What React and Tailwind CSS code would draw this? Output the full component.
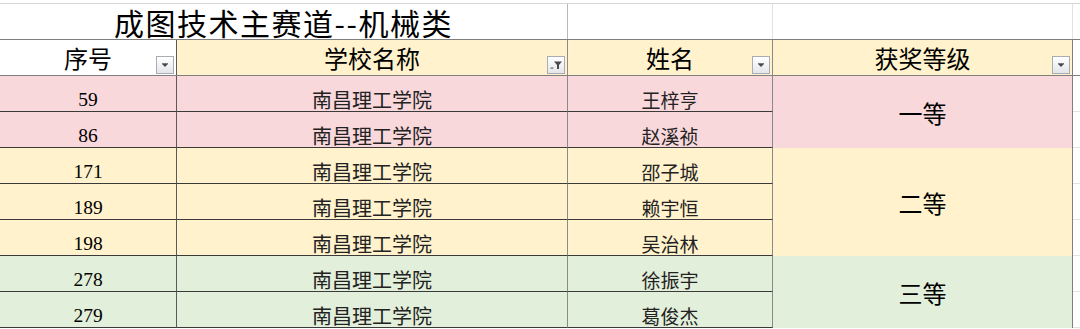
import React from "react";

const SANS = { fontFamily: '"Noto Sans CJK SC", "Noto Sans", sans-serif' };
const SERIF = { fontFamily: '"Liberation Serif", "Noto Sans CJK SC", serif' };

function DropBtn({ filter }) {
  return (
    <div className="absolute right-[2px] bottom-[1px] w-[18px] h-[18px] border border-[#a9adb3] bg-gradient-to-b from-white to-[#e3e6ea] flex items-center justify-center">
      {filter ? (
        <svg width="14" height="12" viewBox="0 0 14 12">
          <path d="M5 2.5h8l-3 3.5v4h-2v-4z" fill="#4a4a4a" />
          <rect x="1.5" y="8.5" width="3" height="1.2" fill="#6a6a6a" />
        </svg>
      ) : (
        <svg width="10" height="8" viewBox="0 0 10 8">
          <rect x="2" y="2" width="6" height="1" fill="#7a7a7a" />
          <path d="M2 3h6l-3 3z" fill="#4a4a4a" />
        </svg>
      )}
    </div>
  );
}

const rows = [
  { n: "59", name: "王梓亨", bg: "bg-[#f9d8dc]" },
  { n: "86", name: "赵溪祯", bg: "bg-[#f9d8dc]" },
  { n: "171", name: "邵子城", bg: "bg-[#fff2cc]" },
  { n: "189", name: "赖宇恒", bg: "bg-[#fff2cc]" },
  { n: "198", name: "吴治林", bg: "bg-[#fff2cc]" },
  { n: "278", name: "徐振宇", bg: "bg-[#e2efda]" },
  { n: "279", name: "葛俊杰", bg: "bg-[#e2efda]" },
];

export default function App() {
  return (
    <div className="w-[1080px] h-[329px] bg-white overflow-hidden flex flex-col text-black">
      <div className="h-[4px] border-b border-[#d6d6d6] shrink-0" />
      {/* Title row */}
      <div className="h-[35px] flex shrink-0">
        <div
          className="w-[568px] border-r border-[#b8b8b8] flex items-center justify-center pt-[1px] text-[30px] leading-[30px] tracking-[1.5px]"
          style={SANS}
        >
          成图技术主赛道--机械类
        </div>
        <div className="w-[205px] border-r border-[#e2e2e2]" />
        <div className="w-[300px] border-r border-[#e2e2e2]" />
        <div className="flex-1" />
      </div>
      {/* Header row */}
      <div className="h-[37px] flex shrink-0 border-t border-b border-[#7f7f7f] leading-[28px]" style={SANS}>
        <div className="relative w-[177px] bg-white border-r border-[#5a5a5a] flex items-center justify-center pt-[1px] text-[24px]">
          序号
          <DropBtn />
        </div>
        <div className="relative w-[391px] bg-[#fff2cc] border-r border-[#8a8a8a] flex items-center justify-center pt-[1px] text-[24px]">
          学校名称
          <DropBtn filter />
        </div>
        <div className="relative w-[205px] bg-[#fff2cc] border-r border-[#8a8a8a] flex items-center justify-center pt-[1px] text-[24px]">
          姓名
          <DropBtn />
        </div>
        <div className="relative w-[300px] bg-[#fff2cc] border-r border-[#7f7f7f] flex items-center justify-center pt-[1px] text-[24px]">
          获奖等级
          <DropBtn />
        </div>
        <div className="flex-1 bg-white" />
      </div>
      {/* Body */}
      <div className="grid grid-cols-[177px_391px_205px_300px_1fr] grid-rows-[repeat(7,36px)] shrink-0">
        {rows.map((r, i) => (
          <React.Fragment key={r.n}>
            <div
              className={`${r.bg} border-r border-b border-[#3a3a3a] border-r-[#5a5a5a] flex items-end justify-center text-[19.5px] leading-[22px]`}
              style={{ ...SERIF, gridRow: i + 1, gridColumn: 1 }}
            >
              {r.n}
            </div>
            <div
              className={`${r.bg} border-r border-b border-[#3a3a3a] border-r-[#8a8a8a] flex items-end justify-center text-[20px] leading-[23px] text-[#222]`}
              style={{ ...SANS, gridRow: i + 1, gridColumn: 2 }}
            >
              南昌理工学院
            </div>
            <div
              className={`${r.bg} border-r border-b border-[#3a3a3a] border-r-[#8a8a8a] flex items-end justify-center text-[19px] leading-[23px] text-[#222]`}
              style={{ ...SANS, gridRow: i + 1, gridColumn: 3 }}
            >
              {r.name}
            </div>
            <div
              className="border-b border-[#e4e4e4]"
              style={{ gridRow: i + 1, gridColumn: 5 }}
            />
          </React.Fragment>
        ))}
        <div
          className="bg-[#f9d8dc] border-r border-[#7f7f7f] flex items-center justify-center pt-[2px] text-[24px]"
          style={{ ...SANS, gridRow: "1 / span 2", gridColumn: 4 }}
        >
          一等
        </div>
        <div
          className="bg-[#fff2cc] border-r border-[#7f7f7f] flex items-center justify-center pt-[2px] text-[24px]"
          style={{ ...SANS, gridRow: "3 / span 3", gridColumn: 4 }}
        >
          二等
        </div>
        <div
          className="bg-[#e2efda] border-r border-[#7f7f7f] flex items-center justify-center pt-[2px] text-[24px]"
          style={{ ...SANS, gridRow: "6 / span 2", gridColumn: 4 }}
        >
          三等
        </div>
      </div>
    </div>
  );
}
